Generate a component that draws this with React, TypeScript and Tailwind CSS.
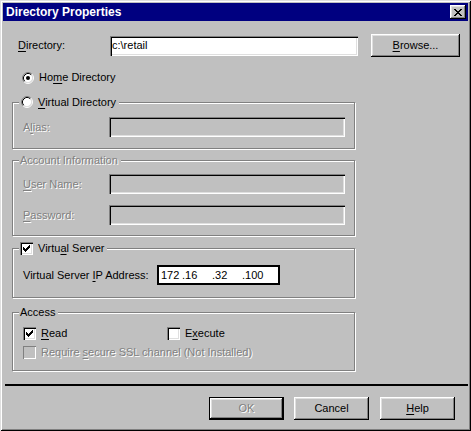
import type { ReactNode } from 'react'

const raised =
  'shadow-[inset_-1px_-1px_0_#000,inset_1px_1px_0_#fff,inset_-2px_-2px_0_#808080,inset_2px_2px_0_#dfdfdf]'
const sunken =
  'shadow-[inset_1px_1px_0_#808080,inset_2px_2px_0_#000,inset_-1px_-1px_0_#fff,inset_-2px_-2px_0_#dfdfdf]'
const disabledText = 'text-[#808080] [text-shadow:1px_1px_0_#fff]'

function U({ children }: { children: ReactNode }) {
  return <span className="underline underline-offset-[2px]">{children}</span>
}

function Radio({ checked }: { checked?: boolean }) {
  return (
    <svg width="12" height="12" viewBox="0 0 12 12" className="shrink-0">
      <circle cx="6" cy="6" r="4.5" fill="#fff" />
      <path d="M2.11 9.89 A5.5 5.5 0 0 1 9.89 2.11" fill="none" stroke="#808080" />
      <path d="M9.89 2.11 A5.5 5.5 0 0 1 2.11 9.89" fill="none" stroke="#fff" />
      <path d="M2.82 9.18 A4.5 4.5 0 0 1 9.18 2.82" fill="none" stroke="#000" />
      <path d="M9.18 2.82 A4.5 4.5 0 0 1 2.82 9.18" fill="none" stroke="#dfdfdf" />
      {checked && <circle cx="6" cy="6" r="2" fill="#000" />}
    </svg>
  )
}

function Checkbox({ checked, disabled }: { checked?: boolean; disabled?: boolean }) {
  const cols = [
    [3, 5],
    [4, 6],
    [5, 7],
    [6, 6],
    [7, 5],
    [8, 4],
    [9, 3],
  ]
  return (
    <div
      className={`relative h-[13px] w-[13px] shrink-0 ${sunken} ${
        disabled ? 'bg-[#c0c0c0]' : 'bg-white'
      }`}
    >
      {checked && (
        <svg width="13" height="13" viewBox="0 0 13 13" className="absolute left-0 top-0">
          {cols.map(([x, y]) => (
            <rect key={x} x={x} y={y} width="1" height="3" fill="#000" />
          ))}
        </svg>
      )}
    </div>
  )
}

function Group({
  legend,
  className,
  children,
}: {
  legend: ReactNode
  className: string
  children: ReactNode
}) {
  return (
    <div
      className={`relative ml-[9px] w-[343px] border border-[#808080] shadow-[1px_1px_0_#fff,inset_1px_1px_0_#fff] ${className}`}
    >
      <div className="absolute left-[6px] top-[-8px] flex h-[14px] items-center bg-[#c0c0c0] pr-[3px]">
        {legend}
      </div>
      {children}
    </div>
  )
}

function Button({
  children,
  isDefault,
  disabled,
  className = '',
}: {
  children: ReactNode
  isDefault?: boolean
  disabled?: boolean
  className?: string
}) {
  return (
    <div
      className={`flex h-[23px] w-[75px] items-center justify-center ${
        isDefault ? 'border border-black' : ''
      } ${className}`}
    >
      <div
        className={`flex h-full w-full items-center justify-center ${raised} ${
          disabled ? disabledText : ''
        }`}
      >
        {children}
      </div>
    </div>
  )
}

function CloseGlyph() {
  const rows = ['XX....XX', '.XX..XX.', '..XXXX..', '...XX...', '..XXXX..', '.XX..XX.', 'XX....XX']
  return (
    <svg width="8" height="7" viewBox="0 0 8 7">
      {rows.flatMap((r, y) =>
        r.split('').map((c, x) =>
          c === 'X' ? <rect key={`${x}-${y}`} x={x} y={y} width="1" height="1" fill="#000" /> : null,
        ),
      )}
    </svg>
  )
}

export default function App() {
  return (
    <div className="h-[431px] w-[471px] bg-[#c0c0c0] p-[3px] font-['Liberation_Sans',Arial,sans-serif] text-[11px] leading-none text-black shadow-[inset_1px_1px_0_#dfdfdf,inset_-1px_-1px_0_#000,inset_2px_2px_0_#fff,inset_-2px_-2px_0_#808080]">
      <div className="flex h-[18px] items-center justify-between bg-[#000080] pl-[3px] pr-[2px]">
        <span className="text-[12px] font-bold text-white">Directory Properties</span>
        <div className={`flex h-[14px] w-[16px] items-center justify-center bg-[#c0c0c0] ${raised}`}>
          <CloseGlyph />
        </div>
      </div>

      <div className="mt-[13px] flex h-[23px] items-center">
        <span className="ml-[15px] w-[92px]">
          <U>D</U>irectory:
        </span>
        <div className={`flex h-[20px] w-[248px] items-center bg-white pl-[2px] ${sunken}`}>
          c:\retail
        </div>
        <Button className="ml-[13px] !w-[89px]">
          <U>B</U>rowse...
        </Button>
      </div>

      <div className="ml-[19px] mt-[14px] flex h-[13px] items-center gap-[5px]">
        <Radio checked />
        <span>
          Ho<U>m</U>e Directory
        </span>
      </div>

      <Group
        className="mt-[18px] h-[47px] pl-[10px] pt-[14px]"
        legend={
          <div className="flex items-center gap-[5px] pl-[2px]">
            <Radio />
            <span>
              <U>V</U>irtual Directory
            </span>
          </div>
        }
      >
        <div className="flex h-[20px] items-center">
          <span className={`w-[86px] ${disabledText}`}>
            A<U>l</U>ias:
          </span>
          <div className={`h-[20px] w-[236px] ${sunken}`} />
        </div>
      </Group>

      <Group
        className="mt-[11px] h-[76px] pl-[10px] pt-[13px]"
        legend={<span className={`pl-[1px] ${disabledText}`}>Account Information</span>}
      >
        <div className="flex h-[20px] items-center">
          <span className={`w-[86px] ${disabledText}`}>
            <U>U</U>ser Name:
          </span>
          <div className={`h-[20px] w-[236px] ${sunken}`} />
        </div>
        <div className="mt-[11px] flex h-[20px] items-center">
          <span className={`w-[86px] ${disabledText}`}>
            <U>P</U>assword:
          </span>
          <div className={`h-[20px] w-[236px] ${sunken}`} />
        </div>
      </Group>

      <Group
        className="mt-[12px] h-[50px] pl-[10px] pt-[16px]"
        legend={
          <div className="flex items-center gap-[5px] pl-[1px]">
            <Checkbox checked />
            <span>
              Virtu<U>a</U>l Server
            </span>
          </div>
        }
      >
        <div className="flex h-[20px] items-center">
          <span className="w-[134px] shrink-0">
            Virtual Server <U>I</U>P Address:
          </span>
          <div className="flex h-[20px] w-[123px] shrink-0 items-center border-2 border-black bg-white pl-[2px]">
            <span className="inline-block w-[21px] shrink-0">172</span>
            <span className="inline-block w-[30px] shrink-0">.16</span>
            <span className="inline-block w-[30px] shrink-0">.32</span>
            <span className="inline-block shrink-0">.100</span>
          </div>
        </div>
      </Group>

      <Group
        className="mt-[14px] h-[59px] pl-[10px] pt-[14px]"
        legend={<span className="pl-[1px]">Access</span>}
      >
        <div className="flex h-[13px] items-center">
          <div className="flex w-[144px] items-center gap-[5px]">
            <Checkbox checked />
            <span>
              <U>R</U>ead
            </span>
          </div>
          <div className="flex items-center gap-[5px]">
            <Checkbox />
            <span>
              E<U>x</U>ecute
            </span>
          </div>
        </div>
        <div className="mt-[6px] flex h-[13px] items-center gap-[5px]">
          <div className="h-[13px] w-[13px] shadow-[inset_1px_1px_0_#808080,inset_-1px_-1px_0_#fff]" />
          <span className={disabledText}>
            Require <U>s</U>ecure SSL channel (Not Installed)
          </span>
        </div>
      </Group>

      <div className="ml-[2px] mt-[13px] h-[2px] w-[463px] bg-black" />

      <div className="mt-[11px] flex justify-end pr-[13px]">
        <Button isDefault disabled className="mr-[10px]">
          OK
        </Button>
        <Button className="mr-[11px]">Cancel</Button>
        <Button>
          <U>H</U>elp
        </Button>
      </div>
    </div>
  )
}
